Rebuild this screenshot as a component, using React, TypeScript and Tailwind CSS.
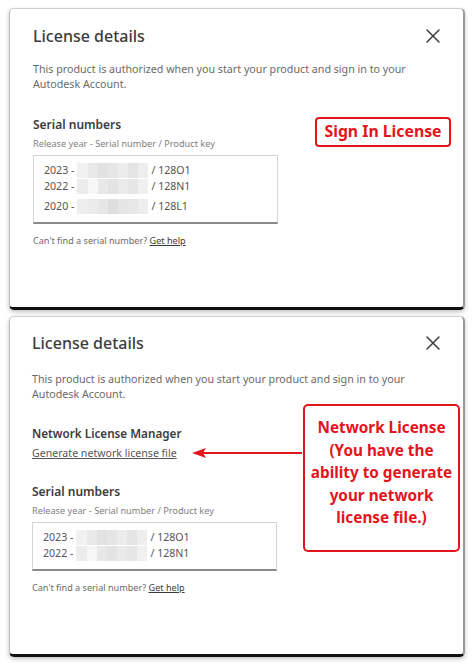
import React from "react";

const font = { fontFamily: '"Noto Sans", "Open Sans", sans-serif' };

function CloseIcon() {
  return (
    <svg width="14" height="14" viewBox="0 0 14 14" fill="none">
      <path d="M1 1L13 13M13 1L1 13" stroke="#3c3c3c" strokeWidth="1.5" strokeLinecap="round" />
    </svg>
  );
}

const mosaics: string[][] = [
  ["#f1f1f1", "#e9e9e9", "#e2e2e2", "#e6e6e6", "#ececec", "#e4e4e4", "#eeeeee"],
  ["#ececec", "#f6f6f6", "#e8e8e8", "#e3e3e3", "#eaeaea", "#e6e6e6", "#f0f0f0"],
  ["#eeeeee", "#ebebeb", "#e6e6e6", "#dedede", "#e5e5e5", "#e7e7e7", "#ededed"],
];

function Blur({ idx }: { idx: number }) {
  const cells = mosaics[idx % mosaics.length];
  return (
    <span className="inline-flex h-[15px] w-[71px] mx-[3px] relative top-[-1px]">
      {cells.map((c, i) => (
        <span key={i} className="flex-1 h-full" style={{ backgroundColor: c }} />
      ))}
    </span>
  );
}

function Row({ year, code, idx, extra }: { year: string; code: string; idx: number; extra?: boolean }) {
  return (
    <div className={`flex items-center h-[16px] text-[10.6px] text-[#555] ${extra ? "mt-[4px]" : ""}`}>
      <span>{year} -</span>
      <Blur idx={idx} />
      <span>/ {code}</span>
    </div>
  );
}

function Header() {
  return (
    <div className="flex items-center justify-between pr-[23px]">
      <div className="text-[16px] leading-[24px] text-[#3c3c3c] font-medium">License details</div>
      <CloseIcon />
    </div>
  );
}

function Desc({ mt }: { mt: string }) {
  return (
    <p className={`${mt} text-[10.7px] leading-[15px] text-[#6a6a6a] pr-[40px]`}>
      This product is authorized when you start your product and sign in to your Autodesk Account.
    </p>
  );
}

function SerialSection({ rows, mt }: { rows: { year: string; code: string; extra?: boolean }[]; mt: string }) {
  return (
    <div className={mt}>
      <div className="text-[12px] leading-[18px] text-[#3c3c3c] font-semibold">Serial numbers</div>
      <div className="mt-[3px] text-[9.2px] leading-[14px] text-[#808080]">Release year - Serial number / Product key</div>
      <div className="mt-[4px] w-[245px] border border-[#d4d4d4] border-b-2 border-b-[#8a8a8a] pl-[10px] pt-[7px] pb-[7px]">
        {rows.map((r, i) => (
          <Row key={i} year={r.year} code={r.code} idx={i} extra={r.extra} />
        ))}
      </div>
      <div className="mt-[10px] text-[9.1px] leading-[14px] text-[#6a6a6a]">
        Can't find a serial number? <span className="underline text-[#3c3c3c]">Get help</span>
      </div>
    </div>
  );
}

export default function App() {
  return (
    <div className="w-[474px] h-[668px] bg-white pt-[8px] pl-[9px]" style={font}>
      <div className="relative w-[456px] h-[302px] bg-white rounded-[5px] border-t border-l border-t-[#cfcfcf] border-l-[#bdbdbd] border-r-2 border-r-[#9a9a9a] border-b-[3px] border-b-[#111] shadow-[0_2px_4px_rgba(0,0,0,0.25)] pl-[23px] pt-[15px]">
        <Header />
        <Desc mt="mt-[14px]" />
        <SerialSection
          mt="mt-[24px]"
          rows={[
            { year: "2023", code: "128O1" },
            { year: "2022", code: "128N1" },
            { year: "2020", code: "128L1", extra: true },
          ]}
        />
        <div className="absolute left-[305px] top-[108px] w-[136px] h-[30px] border-2 border-[#e3151c] rounded-[4px] flex items-center justify-center text-[15.8px] font-bold text-[#e3151c] leading-none">
          Sign In License
        </div>
      </div>

      <div className="relative mt-[6px] w-[456px] h-[341px] bg-white rounded-[5px] border-t border-l border-t-[#cfcfcf] border-l-[#bdbdbd] border-r-2 border-r-[#9a9a9a] border-b-[3px] border-b-[#111] shadow-[0_2px_4px_rgba(0,0,0,0.25)] pl-[22px] pt-[14px]">
        <Header />
        <Desc mt="mt-[17px]" />
        <div className="mt-[22px] text-[11.7px] leading-[18px] text-[#3c3c3c] font-semibold">Network License Manager</div>
        <div className="mt-[3px] text-[10.6px] leading-[16px] text-[#555] underline">Generate network license file</div>
        <SerialSection
          mt="mt-[22px]"
          rows={[
            { year: "2023", code: "128O1" },
            { year: "2022", code: "128N1" },
          ]}
        />
        <svg className="absolute left-[182px] top-[129px]" width="112" height="14" viewBox="0 0 112 14">
          <line x1="10" y1="7" x2="110" y2="7" stroke="#e3151c" strokeWidth="2" />
          <path d="M0 7L14 2L11 7L14 12Z" fill="#e3151c" />
        </svg>
        <div className="absolute left-[293px] top-[87px] w-[157px] h-[148px] border-2 border-[#e3151c] rounded-[5px] flex flex-col items-center pt-[10px] text-[15.3px] leading-[22.5px] font-bold text-[#e3151c] text-center">
          <span>Network License</span>
          <span>(You have the</span>
          <span>ability to generate</span>
          <span>your network</span>
          <span>license file.)</span>
        </div>
      </div>
    </div>
  );
}
